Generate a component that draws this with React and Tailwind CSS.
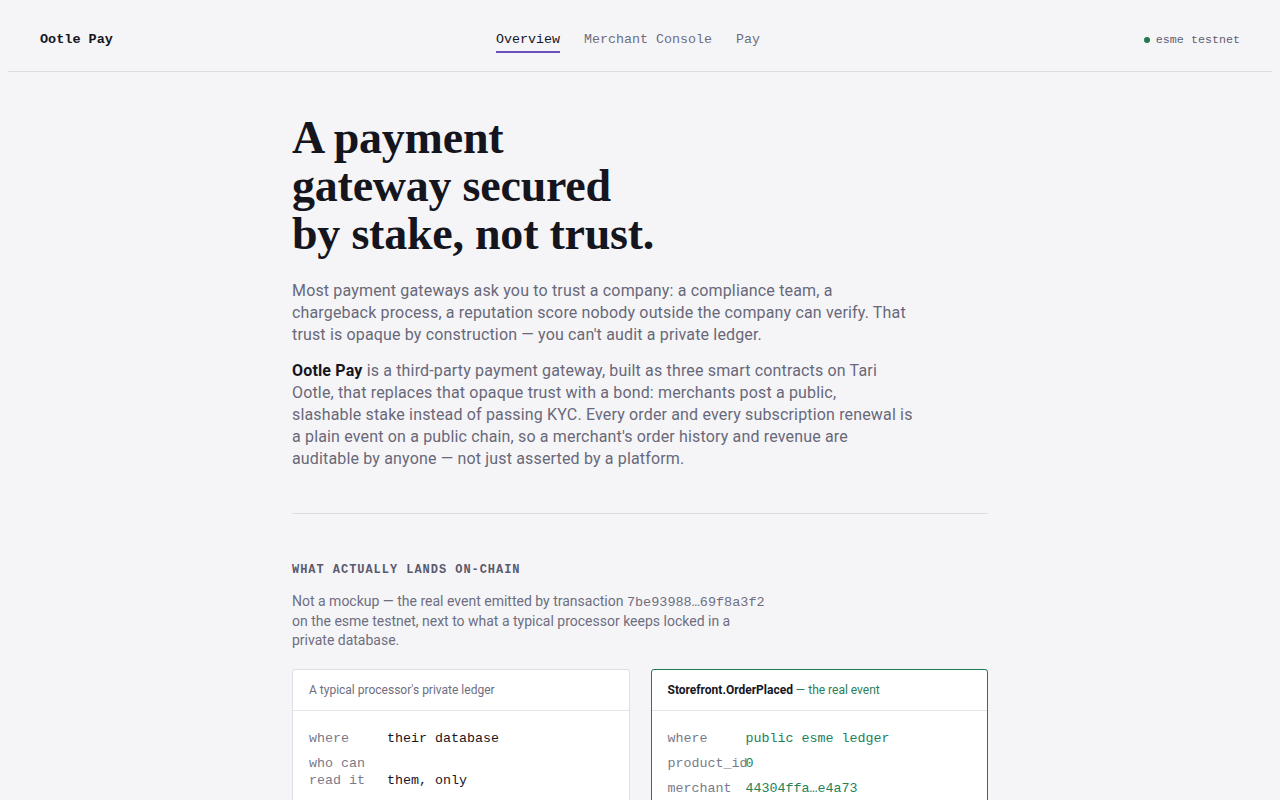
import React from 'react'

const mono = "font-['Liberation_Mono','DejaVu_Sans_Mono',monospace]"
const sans = "font-['Roboto','Noto_Sans',sans-serif]"

const privateRows = [
  { label: 'where', value: 'their database' },
  { label: 'who can read it', value: 'them, only' },
  { label: 'what', value: 'card holder, bank, email' },
  { label: 'audit', value: 'trust us' },
]

const chainRows = [
  { label: 'where', value: 'public esme ledger' },
  { label: 'product_id', value: '0' },
  { label: 'merchant', value: '44304ffa…e4a73' },
  { label: 'buyer', value: '9c1b27d0…3af10' },
  { label: 'amount', value: '2500' },
]

function Row({ label, value, tone }) {
  return (
    <div className="flex items-end">
      <span className="w-[78px] shrink-0 whitespace-pre-wrap text-[#7a7a8a] leading-[17px]">{label}</span>
      <span className={tone + ' leading-[17px] whitespace-nowrap'}>{value}</span>
    </div>
  )
}

export default function App() {
  return (
    <div className={`min-h-screen bg-[#f5f5f8] text-[#16161f] ${sans}`}>
      <header className="mx-2 border-b border-[#dcdce2] h-[72px] flex items-start justify-between px-8 pt-[30px]">
        <div className={`${mono} text-[13.5px] leading-[20px] font-bold w-[200px]`}>Ootle Pay</div>
        <nav className={`${mono} text-[13.33px] leading-[20px] flex gap-6 ml-[-24px]`}>
          <a className="text-[#16161f] border-b-2 border-[#6b4fbb] pb-[1px]">Overview</a>
          <a className="text-[#6e6e80]">Merchant Console</a>
          <a className="text-[#6e6e80]">Pay</a>
        </nav>
        <div className={`${mono} text-[11.7px] leading-[20px] text-[#5f5f70] w-[200px] flex justify-end items-center gap-[6px]`}>
          <span className="w-[6px] h-[6px] rounded-full bg-[#1d7a50]" />
          esme testnet
        </div>
      </header>

      <main className="w-[696px] mx-auto pt-[42px]">
        <h1 className="font-['Liberation_Serif','DejaVu_Serif',serif] font-bold text-[46px] leading-[48px] tracking-[-0.005em] text-[#15151e]">
          A payment<br />gateway secured<br />by stake, not trust.
        </h1>

        <p className="mt-[22px] max-w-[660px] text-[16px] leading-[22px] tracking-[0.01em] text-[#686878]">
          Most payment gateways ask you to trust a company: a compliance team, a<br />
          chargeback process, a reputation score nobody outside the company can verify. That<br />
          trust is opaque by construction — you can't audit a private ledger.
        </p>
        <p className="mt-[14px] max-w-[660px] text-[16px] leading-[22px] tracking-[0.01em] text-[#686878]">
          <span className="font-bold text-[#15151e]">Ootle Pay</span> is a third-party payment gateway, built as three smart contracts on Tari<br />
          Ootle, that replaces that opaque trust with a bond: merchants post a public,<br />
          slashable stake instead of passing KYC. Every order and every subscription renewal is<br />
          a plain event on a public chain, so a merchant's order history and revenue are<br />
          auditable by anyone — not just asserted by a platform.
        </p>

        <div className="mt-[43px] border-t border-[#dcdce2]" />

        <h2 className={`${mono} mt-[47px] text-[12px] font-bold tracking-[0.08em] text-[#5a5a6e]`}>
          WHAT ACTUALLY LANDS ON-CHAIN
        </h2>
        <p className="mt-[13px] max-w-[480px] text-[14px] leading-[19px] text-[#6e6e80]">
          Not a mockup — the real event emitted by transaction <span className={`${mono} text-[13.5px]`}>7be93988…69f8a3f2</span> on the esme testnet, next to what a typical processor keeps locked in a private database.
        </p>

        <div className="mt-[19px] grid grid-cols-2 gap-[21px]">
          <div className="bg-white border border-[#dedee4] rounded-[3px]">
            <div className="h-[41px] px-4 flex items-center border-b border-[#e4e4ea] text-[12px] text-[#6e6e80]">
              A typical processor's private ledger
            </div>
            <div className={`${mono} text-[13.33px] px-4 pt-[19px] pb-4 flex flex-col gap-[8px]`}>
              {privateRows.map((r) => (
                <Row key={r.label} label={r.label} value={r.value} tone="text-[#16161f]" />
              ))}
            </div>
          </div>
          <div className="bg-white border border-[#1f7a55] rounded-[3px]">
            <div className="h-[41px] px-4 flex items-center border-b border-[#e4e4ea] text-[12px]">
              <span className="font-bold text-[#16161f]">Storefront.OrderPlaced</span>
              <span className="text-[#2a7d58]">&nbsp;— the real event</span>
            </div>
            <div className={`${mono} text-[13.33px] px-4 pt-[19px] pb-4 flex flex-col gap-[8px]`}>
              {chainRows.map((r) => (
                <Row key={r.label} label={r.label} value={r.value} tone="text-[#22805a]" />
              ))}
            </div>
          </div>
        </div>
        <div className="h-16" />
      </main>
    </div>
  )
}
